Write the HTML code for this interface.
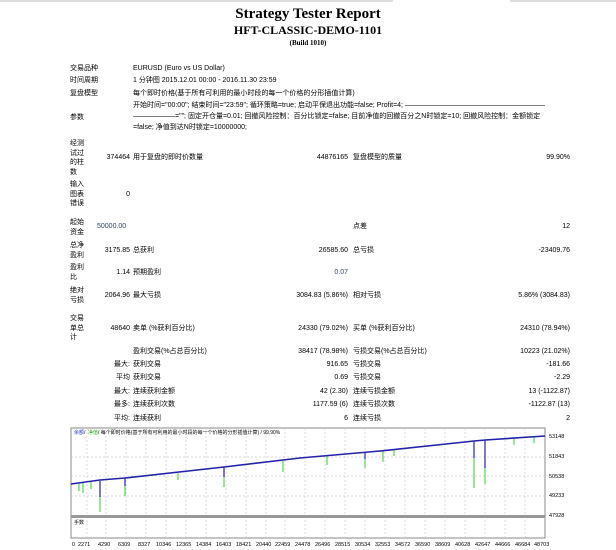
<!DOCTYPE html>
<html><head><meta charset="utf-8"><style>
body{margin:0;width:616px;height:550px;background:#fff;position:relative;overflow:hidden;font-family:"Liberation Sans","Noto Sans CJK SC",sans-serif;font-size:7px;color:#000}
.t{position:absolute;white-space:nowrap;line-height:9px}
.v{position:absolute;left:70px;width:16px;white-space:normal;word-break:break-all;line-height:9.5px}
.r{text-align:right}
.h{position:absolute;left:0;width:616px;text-align:center;font-family:"Liberation Serif",serif;font-weight:bold}
.b{color:#334466}
</style></head><body>
<div style="position:absolute;left:0;top:0;width:393px;height:2px;background:#ddd"></div>
<div style="position:absolute;left:510px;top:0;width:106px;height:2px;background:#ddd"></div>
<div class="h" style="top:5px;font-size:15px;line-height:18px">Strategy Tester Report</div>
<div class="h" style="top:23px;font-size:12px;line-height:14px">HFT-CLASSIC-DEMO-1101</div>
<div class="h" style="top:39px;font-size:7px;line-height:9px">(Build 1010)</div>

<div class="t" style="left:70px;top:64px">交易品种</div><div class="t" style="left:133px;top:64px">EURUSD (Euro vs US Dollar)</div>
<div class="t" style="left:70px;top:76px">时间周期</div><div class="t" style="left:133px;top:76px">1 分钟图 2015.12.01 00:00 - 2016.11.30 23:59</div>
<div class="t" style="left:70px;top:89px">复盘模型</div><div class="t" style="left:133px;top:89px">每个即时价格(基于所有可利用的最小时段的每一个价格的分形插值计算)</div>
<div class="t" style="left:70px;top:113px">参数</div>
<div class="t" style="left:133px;top:101px">开始时间="00:00"; 结束时间="23:59"; 循环策略=true; 启动平保退出功能=false; Profit=4; ————————————————————</div>
<div class="t" style="left:133px;top:112px">——————=""; 固定开仓量=0.01; 回撤风险控制：百分比锁定=false; 目前净值的回撤百分之N时锁定=10; 回撤风险控制：金额锁定</div>
<div class="t" style="left:133px;top:123px">=false; 净值到达N时锁定=10000000;</div>

<div class="v" style="top:139px">经测试过的柱数</div>
<div class="t r" style="left:90px;width:40px;top:153px">374464</div><div class="t" style="left:133px;top:153px">用于复盘的即时价数量</div>
<div class="t r" style="left:270px;width:78px;top:153px">44876165</div><div class="t" style="left:353px;top:153px">复盘模型的质量</div>
<div class="t r" style="left:500px;width:70px;top:153px">99.90%</div>

<div class="v" style="top:180px">输入图表错误</div>
<div class="t r" style="left:90px;width:40px;top:190px">0</div>

<div class="v" style="top:218px">起始资金</div>
<div class="t b" style="left:97px;top:222px">50000.00</div>
<div class="t" style="left:353px;top:222px">点差</div><div class="t r" style="left:500px;width:70px;top:222px">12</div>

<div class="v" style="top:241px">总净盈利</div>
<div class="t r" style="left:90px;width:40px;top:246px">3175.85</div><div class="t" style="left:133px;top:246px">总获利</div>
<div class="t r" style="left:250px;width:98px;top:246px">26585.60</div><div class="t" style="left:353px;top:246px">总亏损</div>
<div class="t r" style="left:490px;width:80px;top:246px">-23409.76</div>

<div class="v" style="top:263px">盈利比</div>
<div class="t r" style="left:90px;width:40px;top:268px">1.14</div><div class="t" style="left:133px;top:268px">预期盈利</div>
<div class="t r b" style="left:250px;width:98px;top:268px">0.07</div>

<div class="v" style="top:286px">绝对亏损</div>
<div class="t r" style="left:90px;width:40px;top:291px">2064.96</div><div class="t" style="left:133px;top:291px">最大亏损</div>
<div class="t r" style="left:250px;width:98px;top:291px">3084.83 (5.86%)</div><div class="t" style="left:353px;top:291px">相对亏损</div>
<div class="t r" style="left:470px;width:100px;top:291px">5.86% (3084.83)</div>

<div class="v" style="top:314px">交易单总计</div>
<div class="t r" style="left:90px;width:40px;top:324px">48640</div><div class="t" style="left:133px;top:324px">卖单 (%获利百分比)</div>
<div class="t r" style="left:250px;width:98px;top:324px">24330 (79.02%)</div><div class="t" style="left:353px;top:324px">买单 (%获利百分比)</div>
<div class="t r" style="left:470px;width:100px;top:324px">24310 (78.94%)</div>

<div class="t" style="left:133px;top:347px">盈利交易(%占总百分比)</div>
<div class="t r" style="left:250px;width:98px;top:347px">38417 (78.98%)</div><div class="t" style="left:353px;top:347px">亏损交易(%占总百分比)</div>
<div class="t r" style="left:470px;width:100px;top:347px">10223 (21.02%)</div>

<div class="t r" style="left:90px;width:40px;top:360px">最大:</div><div class="t" style="left:133px;top:360px">获利交易</div>
<div class="t r" style="left:250px;width:98px;top:360px">916.65</div><div class="t" style="left:353px;top:360px">亏损交易</div>
<div class="t r" style="left:470px;width:100px;top:360px">-181.66</div>

<div class="t r" style="left:90px;width:40px;top:373px">平均</div><div class="t" style="left:133px;top:373px">获利交易</div>
<div class="t r" style="left:250px;width:98px;top:373px">0.69</div><div class="t" style="left:353px;top:373px">亏损交易</div>
<div class="t r" style="left:470px;width:100px;top:373px">-2.29</div>

<div class="t r" style="left:90px;width:40px;top:387px">最大:</div><div class="t" style="left:133px;top:387px">连续获利金额</div>
<div class="t r" style="left:250px;width:98px;top:387px">42 (2.30)</div><div class="t" style="left:353px;top:387px">连续亏损金额</div>
<div class="t r" style="left:470px;width:100px;top:387px">13 (-1122.87)</div>

<div class="t r" style="left:90px;width:40px;top:400px">最多:</div><div class="t" style="left:133px;top:400px">连续获利次数</div>
<div class="t r" style="left:250px;width:98px;top:400px">1177.59 (6)</div><div class="t" style="left:353px;top:400px">连续亏损次数</div>
<div class="t r" style="left:470px;width:100px;top:400px">-1122.87 (13)</div>

<div class="t r" style="left:90px;width:40px;top:414px">平均:</div><div class="t" style="left:133px;top:414px">连续获利</div>
<div class="t r" style="left:250px;width:98px;top:414px">6</div><div class="t" style="left:353px;top:414px">连续亏损</div>
<div class="t r" style="left:470px;width:100px;top:414px">2</div>

<svg style="position:absolute;left:0;top:0" width="616" height="550" xmlns="http://www.w3.org/2000/svg" font-family="Liberation Sans, Noto Sans CJK SC, sans-serif">
<rect x="71" y="428" width="474" height="110" fill="#fff" stroke="#888" stroke-width="1"/>
<g stroke="#ccc" stroke-dasharray="2,2" stroke-width="0.7">
<line x1="71" y1="457" x2="545" y2="457"/><line x1="71" y1="476" x2="545" y2="476"/><line x1="71" y1="496" x2="545" y2="496"/>
<line x1="87" y1="428" x2="87" y2="538"/><line x1="106" y1="428" x2="106" y2="538"/><line x1="126" y1="428" x2="126" y2="538"/><line x1="146" y1="428" x2="146" y2="538"/><line x1="166" y1="428" x2="166" y2="538"/><line x1="186" y1="428" x2="186" y2="538"/><line x1="206" y1="428" x2="206" y2="538"/><line x1="226" y1="428" x2="226" y2="538"/><line x1="246" y1="428" x2="246" y2="538"/><line x1="266" y1="428" x2="266" y2="538"/><line x1="285" y1="428" x2="285" y2="538"/><line x1="305" y1="428" x2="305" y2="538"/><line x1="325" y1="428" x2="325" y2="538"/><line x1="345" y1="428" x2="345" y2="538"/><line x1="365" y1="428" x2="365" y2="538"/><line x1="385" y1="428" x2="385" y2="538"/><line x1="405" y1="428" x2="405" y2="538"/><line x1="425" y1="428" x2="425" y2="538"/><line x1="445" y1="428" x2="445" y2="538"/><line x1="465" y1="428" x2="465" y2="538"/><line x1="485" y1="428" x2="485" y2="538"/><line x1="505" y1="428" x2="505" y2="538"/><line x1="525" y1="428" x2="525" y2="538"/>
</g>
<rect x="71" y="515" width="474" height="3" fill="#999"/>
<g stroke="#33cc33" stroke-width="1">
<line x1="79" y1="484" x2="79" y2="491"/><line x1="83" y1="483" x2="83" y2="493"/><line x1="91" y1="482" x2="91" y2="489"/><line x1="100" y1="481" x2="100" y2="512"/><line x1="125" y1="478" x2="125" y2="496"/><line x1="178" y1="473" x2="178" y2="480"/><line x1="224" y1="467" x2="224" y2="487"/><line x1="283" y1="461" x2="283" y2="472"/><line x1="327" y1="456" x2="327" y2="465"/><line x1="365" y1="453" x2="365" y2="468"/><line x1="383" y1="451" x2="383" y2="462"/><line x1="394" y1="449" x2="394" y2="456"/><line x1="474" y1="441" x2="474" y2="488"/><line x1="485" y1="440" x2="485" y2="484"/><line x1="514" y1="438" x2="514" y2="445"/><line x1="534" y1="437" x2="534" y2="443"/>
</g>
<g stroke="#2222bb" stroke-width="1.2">
<line x1="100" y1="481" x2="100" y2="497"/><line x1="125" y1="478" x2="125" y2="486"/><line x1="224" y1="467" x2="224" y2="477"/><line x1="365" y1="453" x2="365" y2="459"/><line x1="474" y1="441" x2="474" y2="458"/><line x1="485" y1="440" x2="485" y2="468"/>
</g>
<polyline points="71,484 100,480 125,478 224,467 300,458 380,451 474,441 485,440 545,436" fill="none" stroke="#2222aa" stroke-width="1.6"/>
<text x="74" y="434" font-size="5" fill="#2233cc">余额</text><text x="84" y="434" font-size="5" fill="#000">/</text><text x="88" y="434" font-size="5" fill="#22aa22">净值</text><text x="98" y="434" font-size="5" fill="#000">/ 每个即时价格(基于所有可利用的最小时段的每一个价格的分形插值计算) / 99.90%</text>
<text x="74" y="524" font-size="5">手数</text>
<g font-size="5.5" fill="#000">
<text x="549" y="438">53148</text><text x="549" y="458">51843</text><text x="549" y="478">50538</text><text x="549" y="497">49233</text><text x="549" y="517">47928</text>
</g>
<g font-size="5.5" fill="#000">
<text x="72" y="546">0</text><text x="78" y="546">2271</text><text x="98" y="546">4290</text><text x="118" y="546">6309</text><text x="138" y="546">8327</text><text x="156" y="546">10346</text><text x="176" y="546">12365</text><text x="196" y="546">14384</text><text x="216" y="546">16403</text><text x="236" y="546">18421</text><text x="256" y="546">20440</text><text x="275" y="546">22459</text><text x="295" y="546">24478</text><text x="315" y="546">26496</text><text x="335" y="546">28515</text><text x="355" y="546">30534</text><text x="375" y="546">32553</text><text x="395" y="546">34572</text><text x="415" y="546">36590</text><text x="435" y="546">38609</text><text x="455" y="546">40628</text><text x="475" y="546">42647</text><text x="495" y="546">44666</text><text x="515" y="546">46684</text><text x="534" y="546">48703</text>
</g>
</svg>
</body></html>
